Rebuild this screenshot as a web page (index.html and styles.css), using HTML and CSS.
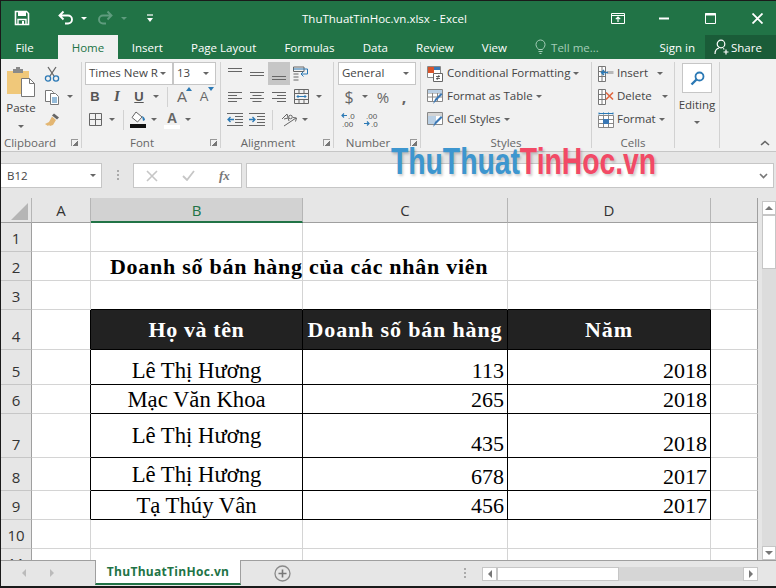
FILE: index.html
```html
<!DOCTYPE html>
<html lang="vi">
<head>
    <meta charset="UTF-8">
    <title>ThuThuatTinHoc.vn.xlsx - Excel</title>
    <link rel="stylesheet" href="styles.css">
</head>
<body>
<div class="window">
    <!-- Title bar -->
    <div class="titlebar">
        <div class="qat">
            <svg class="qat-save" width="16" height="16" viewBox="0 0 16 16"><path d="M1.500 1.500h11l2 2v11h-13z" fill="none" stroke="#fff" stroke-width="1.600"/><path d="M4 1.500h8v4.500H4z" fill="#fff"/><path d="M4 14.500V9.500h8v5" fill="none" stroke="#fff" stroke-width="1.400"/><path d="M8 11h2v3H8z" fill="#fff"/></svg>
            <svg class="qat-undo" width="16" height="16" viewBox="0 0 16 16"><path d="M5.500 1.500 1.500 5.500l4 4M2 5.500h8a4 4 0 0 1 0 8H7" fill="none" stroke="#fff" stroke-width="1.900"/></svg>
            <span class="caret caret-white qat-c1"></span>
            <svg class="qat-redo" width="16" height="16" viewBox="0 0 16 16"><path d="M10.500 1.500l4 4-4 4M14 5.500H6a4 4 0 0 0 0 8h3" fill="none" stroke="#5f9c7e" stroke-width="1.900"/></svg>
            <span class="caret caret-dim qat-c2"></span>
            <svg class="qat-more" width="8" height="9" viewBox="0 0 8 9"><path d="M1 1h6" stroke="#fff" stroke-width="1.200"/><path d="M1 4h6L4 8z" fill="#fff"/></svg>
        </div>
        <div class="title">ThuThuatTinHoc.vn.xlsx - Excel</div>
        <div class="winctl">
            <svg class="win-opt" width="14" height="11" viewBox="0 0 14 11"><path d="M.5.500h13v10H.5z" fill="none" stroke="#fff"/><path d="M.5 2.500h13" stroke="#fff"/><path d="M7 4v5M4.800 6.200 7 4l2.200 2.200" fill="none" stroke="#fff" stroke-width="1.200"/></svg>
            <svg class="win-min" width="10" height="3" viewBox="0 0 10 3"><path d="M0 1.500h10" stroke="#fff" stroke-width="2"/></svg>
            <svg class="win-max" width="11" height="11" viewBox="0 0 11 11"><path d="M.5.500h10v10H.5z" fill="none" stroke="#fff"/><path d="M0 1.500h11" stroke="#fff" stroke-width="2"/></svg>
            <svg class="win-close" width="11" height="11" viewBox="0 0 11 11"><path d="M.5.500l10 10M10.500.500l-10 10" stroke="#fff" stroke-width="1.800"/></svg>
        </div>
    </div>

    <!-- Ribbon tabs -->
    <div class="tabs">
        <span class="tab tab-file">File</span>
        <span class="tab tab-active">Home</span>
        <span class="tab">Insert</span>
        <span class="tab">Page Layout</span>
        <span class="tab">Formulas</span>
        <span class="tab">Data</span>
        <span class="tab">Review</span>
        <span class="tab">View</span>
        <span class="tellme">
            <svg width="11" height="16" viewBox="0 0 11 16"><path d="M3.500 10.500C2.500 8.800 1 8 1 5.500a4.500 4.500 0 0 1 9 0c0 2.500-1.500 3.300-2.500 5z" fill="none" stroke="#a5cdb8"/><path d="M3.500 12.500h4M4.500 14.500h2" stroke="#a5cdb8"/></svg>
            <span>Tell me...</span>
        </span>
        <span class="signin">Sign in</span>
        <span class="share">
            <svg width="16" height="16" viewBox="0 0 16 16"><circle cx="7" cy="5" r="3.800" fill="none" stroke="#fff" stroke-width="1.200"/><path d="M1 15c0-3.500 2-5.500 4-6M9 9.500c.5.200 1 .5 1.300.8" fill="none" stroke="#fff" stroke-width="1.200"/><path d="M12 10.500v5M9.500 13h5" stroke="#fff" stroke-width="1.200"/></svg>
            <span>Share</span>
        </span>
    </div>

    <!-- Ribbon -->
    <div class="ribbon">
        <div class="group g-clipboard">
            <div class="group-body clip-body">
                <div class="paste">
                    <svg width="30" height="32" viewBox="0 0 30 32"><path d="M1 5h22v23H1z" fill="#f0c87a"/><path d="M7 3h10v4H7z" fill="#8a8a8a"/><path d="M10 1h4v3h-4z" fill="#8a8a8a"/><path d="M15.500 12.500h8l5 5v13h-13z" fill="#fff" stroke="#777"/><path d="M23.500 12.500v5h5" fill="none" stroke="#777"/></svg>
                    <span class="paste-label">Paste</span>
                    <span class="caret"></span>
                </div>
                <div class="clip-tools">
                    <div class="rrow"><svg width="16" height="16" viewBox="0 0 16 16"><path d="M4 1l6 9M12 1l-6 9" stroke="#666" stroke-width="1.300"/><circle cx="4" cy="12.500" r="2.600" fill="none" stroke="#2b79b5" stroke-width="1.300"/><circle cx="12" cy="12.500" r="2.600" fill="none" stroke="#2b79b5" stroke-width="1.300"/></svg></div>
                    <div class="rrow"><svg width="16" height="16" viewBox="0 0 16 16"><path d="M1.500 1.500h6l2 2v9h-8z" fill="#fff" stroke="#777"/><path d="M6.500 4.500h5l3 3v8h-8z" fill="#fff" stroke="#777"/><path d="M8 9h5M8 11h5M8 13h5" stroke="#2b79b5"/></svg><span class="caret clip-caret"></span></div>
                    <div class="rrow"><svg width="17" height="16" viewBox="0 0 17 16"><path d="M10 1.500l5 4-2 2-5-4z" fill="#666"/><path d="M8 4.500l4 3.500-3 5-3 1-1-1-1 1-3-2 4-2z" fill="#e3b672"/></svg></div>
                </div>
            </div>
            <div class="group-label label-clip">Clipboard<span class="launcher"></span></div>
        </div>

        <div class="group g-font">
            <div class="rrow">
                <span class="select font-name">Times New R<span class="caret"></span></span>
                <span class="select font-size">13<span class="caret"></span></span>
            </div>
            <div class="rrow">
                <span class="ib"><b class="fmt fmt-b">B</b></span>
                <span class="ib"><i class="fmt fmt-i">I</i></span>
                <span class="ib"><span class="fmt fmt-u">U</span></span>
                <span class="ic"><span class="caret"></span></span>
                <span class="vsep vsep-a"></span>
                <span class="ib grow-a"><span class="big-a">A</span><span class="tri-up"></span></span>
                <span class="ib shrink-a"><span class="small-a">A</span><span class="tri-down"></span></span>
            </div>
            <div class="rrow">
                <span class="ib"><svg width="13" height="13" viewBox="0 0 13 13"><path d="M.5.500h12v12H.5zM6.500.500v12M.5 6.500h12" fill="none" stroke="#666"/></svg></span>
                <span class="ic"><span class="caret"></span></span>
                <span class="vsep vsep-a"></span>
                <span class="ib fill-btn"><svg width="16" height="17" viewBox="0 0 16 17"><path d="M6 1l6 5-4.500 5L2 6.500z" fill="#fff" stroke="#666"/><path d="M12 5c2 1 3 2.500 3 4l-2 1z" fill="#2b79b5"/><path d="M0 13h16v4H0z" fill="#111"/></svg></span>
                <span class="ic ic-narrow"><span class="caret"></span></span>
                <span class="ib color-btn"><span class="color-a">A</span></span>
                <span class="ic ic-narrow"><span class="caret"></span></span>
            </div>
            <div class="group-label label-pad">Font<span class="launcher"></span></div>
        </div>

        <div class="group g-align">
            <div class="rrow">
                <span class="ib"><svg width="14" height="14" viewBox="0 0 14 14"><path d="M0 1.500h14M0 4.500h14" stroke="#666"/></svg></span>
                <span class="ib"><svg width="14" height="14" viewBox="0 0 14 14"><path d="M0 5.500h14M0 8.500h14" stroke="#666"/></svg></span>
                <span class="ib ib-on"><svg width="14" height="14" viewBox="0 0 14 14"><path d="M0 9.500h14M0 12.500h14" stroke="#666"/></svg></span>
                <span class="ib"><svg width="16" height="15" viewBox="0 0 16 15"><path d="M.5 1h10.500v4.500H.5zM.5 8h5M.5 11h5M.5 14h5" fill="none" stroke="#666"/><path d="M.5 3h14v5h-6" fill="none" stroke="#2b79b5"/><path d="M10.500 5.500 8 8l2.500 2.500" fill="none" stroke="#2b79b5"/></svg></span>
            </div>
            <div class="rrow">
                <span class="ib"><svg width="14" height="14" viewBox="0 0 14 14"><path d="M0 2.500h14M0 5.500h9M0 8.500h14M0 11.500h9" stroke="#666"/></svg></span>
                <span class="ib"><svg width="14" height="14" viewBox="0 0 14 14"><path d="M0 2.500h14M2.500 5.500h9M0 8.500h14M2.500 11.500h9" stroke="#666"/></svg></span>
                <span class="ib"><svg width="14" height="14" viewBox="0 0 14 14"><path d="M0 2.500h14M5 5.500h9M0 8.500h14M5 11.500h9" stroke="#666"/></svg></span>
                <span class="ib"><svg width="15" height="15" viewBox="0 0 15 15"><path d="M.5.500h14v14H.5zM.5 4.500h14M.5 10.500h14M5 .5v4M10 .5v4M5 10.500v4M10 10.500v4" fill="none" stroke="#666"/><path d="M3 7.500h9M4.500 6 3 7.500 4.500 9M10.500 6 12 7.500 10.500 9" fill="none" stroke="#2b79b5"/></svg></span>
                <span class="ic merge-c"><span class="caret"></span></span>
            </div>
            <div class="rrow">
                <span class="ib"><svg width="16" height="13" viewBox="0 0 16 13"><path d="M0 .5h16M8 3.500h8M8 6.500h8M8 9.500h8M0 12.500h16" stroke="#666"/><path d="M7 6.500H1M3.500 4 1 6.500 3.500 9" fill="none" stroke="#2b79b5" stroke-width="1.300"/></svg></span>
                <span class="ib"><svg width="16" height="13" viewBox="0 0 16 13"><path d="M0 .5h16M8 3.500h8M8 6.500h8M8 9.500h8M0 12.500h16" stroke="#666"/><path d="M0 6.500h6M3.500 4 6 6.500 3.500 9" fill="none" stroke="#2b79b5" stroke-width="1.300"/></svg></span>
                <span class="vsep vsep-b"></span>
                <span class="ib orient"><svg width="17" height="17" viewBox="0 0 17 17"><path d="M1 8l5-5 2 7M3 8l4-1" fill="none" stroke="#666"/><circle cx="9.500" cy="6" r="1.800" fill="none" stroke="#666"/><path d="M3 15l12-8M12 6.500l3.500.5-1 3.500" fill="none" stroke="#666"/></svg></span>
                <span class="ic ic-narrow"><span class="caret"></span></span>
            </div>
            <div class="group-label label-pad">Alignment<span class="launcher"></span></div>
        </div>

        <div class="group g-number">
            <div class="rrow">
                <span class="select num-format">General<span class="caret"></span></span>
            </div>
            <div class="rrow">
                <span class="ib dollar">$</span>
                <span class="ic ic-narrow"><span class="caret"></span></span>
                <span class="ib percent">%</span>
                <span class="ib comma">,</span>
            </div>
            <div class="rrow">
                <span class="ib ib-20"><svg width="15" height="15" viewBox="0 0 15 15"><path d="M6 3.500H1M3 1.500l-2 2 2 2" fill="none" stroke="#2b79b5" stroke-width="1.200"/><text x="7" y="7" class="dec">.0</text><text x="1" y="14.500" class="dec">.00</text></svg></span>
                <span class="ib ib-20 dec-more"><svg width="15" height="15" viewBox="0 0 15 15"><text x="3" y="7" class="dec">.00</text><path d="M1 11.500h5M4 9.500l2 2-2 2" fill="none" stroke="#2b79b5" stroke-width="1.200"/><text x="8" y="14.500" class="dec">.0</text></svg></span>
            </div>
            <div class="group-label label-pad">Number<span class="launcher"></span></div>
        </div>

        <div class="group g-styles">
            <div class="rrow"><svg class="cmd-icon" width="16" height="16" viewBox="0 0 16 16"><path d="M.5.500h13v11H.5z" fill="#fff" stroke="#888"/><path d="M1 1h6v3H1z" fill="#d9542b"/><path d="M1 4h6v3H1z" fill="#d9542b"/><path d="M7 1h6v3H7z" fill="#3a78b5"/><path d="M6.500 7.500h9v8h-9z" fill="#fff" stroke="#666"/><path d="M9 10.500h4M9 12.500h4M10 14l2-5" stroke="#444" stroke-width=".8"/></svg><span class="cmd">Conditional Formatting</span><span class="caret"></span></div>
            <div class="rrow"><svg class="cmd-icon" width="16" height="16" viewBox="0 0 16 16"><path d="M.5.500h15v12H.5zM.5 4h15M.5 8h15M5.500.5v12M10.500.5v12" fill="#fff" stroke="#888"/><path d="M1 1h14v3H1z" fill="#b9cfe4"/><path d="M6 15l2-5 6-6 1.500 1.500-6 6z" fill="#3a78b5"/></svg><span class="cmd">Format as Table</span><span class="caret"></span></div>
            <div class="rrow"><svg class="cmd-icon" width="16" height="16" viewBox="0 0 16 16"><path d="M.5.500h15v12H.5z" fill="#fff" stroke="#888"/><path d="M1 1h14v3H1z" fill="#d4d4d4"/><path d="M1 4h8v8H1z" fill="#b9cfe4"/><path d="M6 15l2-5 6-6 1.500 1.500-6 6z" fill="#3a78b5"/></svg><span class="cmd">Cell Styles</span><span class="caret"></span></div>
            <div class="group-label">Styles</div>
        </div>

        <div class="group g-cells">
            <div class="rrow"><svg class="cmd-icon" width="16" height="16" viewBox="0 0 16 16"><path d="M.5.500h7v15h-7zM.5 5.500h7M.5 10.500h7M4 .5v15" fill="#fff" stroke="#777"/><path d="M9 5h6.500v3H9z" fill="#b8b8b8"/><path d="M10 6.500H3.500M6 4 3.500 6.500 6 9" fill="none" stroke="#2b79b5" stroke-width="1.500"/></svg><span class="cmd">Insert</span><span class="caret cells-c1"></span></div>
            <div class="rrow"><svg class="cmd-icon" width="16" height="16" viewBox="0 0 16 16"><path d="M.5.500h7v15h-7zM.5 5.500h7M.5 10.500h7M4 .5v15" fill="#fff" stroke="#777"/><path d="M8 3.500l7 7M15 3.500l-7 7" stroke="#e0663f" stroke-width="1.600"/></svg><span class="cmd">Delete</span><span class="caret cells-c2"></span></div>
            <div class="rrow"><svg class="cmd-icon" width="16" height="16" viewBox="0 0 16 16"><path d="M.5 3.500h15v12H.5zM.5 7.500h15M.5 11.500h15M5.500 3.500v12M10.500 3.500v12" fill="#fff" stroke="#888"/><path d="M5 7h6v5H5z" fill="#3a78b5"/><path d="M1 .5v2M5.500.5v2M10.500.5v2M15 .5v2M1 1.500h14" stroke="#2b79b5"/></svg><span class="cmd">Format</span><span class="caret"></span></div>
            <div class="group-label">Cells</div>
        </div>

        <div class="group g-editing">
            <div class="edit-btn"><svg width="15" height="15" viewBox="0 0 15 15"><circle cx="9.500" cy="5.500" r="4" fill="none" stroke="#2b79b5" stroke-width="1.800"/><path d="M6.500 8.500 1.500 13.500" stroke="#2b79b5" stroke-width="2.400"/></svg></div>
            <div class="edit-label">Editing</div>
            <span class="caret"></span>
        </div>
        <svg class="collapse" width="10" height="6" viewBox="0 0 10 6"><path d="M1 5l4-3.500L9 5" fill="none" stroke="#666" stroke-width="1.600"/></svg>
    </div>

    <!-- Formula bar -->
    <div class="formula">
        <div class="namebox">B12<span class="caret"></span></div>
        <div class="fdots"></div>
        <div class="fbtns">
            <svg width="12" height="12" viewBox="0 0 12 12"><path d="M1 1l10 10M11 1 1 11" stroke="#c6c6c6" stroke-width="1.600"/></svg>
            <svg width="13" height="11" viewBox="0 0 13 11"><path d="M1 6l4 4 7-9" fill="none" stroke="#c6c6c6" stroke-width="1.800"/></svg>
            <span class="fx">fx</span>
        </div>
        <div class="finput"><svg width="9" height="6" viewBox="0 0 9 6"><path d="M1 1l3.500 3.500L8 1" fill="none" stroke="#777" stroke-width="1.600"/></svg></div>
    </div>

    <!-- Sheet -->
    <div class="sheet-area">
        <div class="grid">
            <div class="corner"><svg width="17" height="17" viewBox="0 0 17 17"><path d="M17 0v17H0z" fill="#b5b5b5"/></svg></div>
            <div class="colh">A</div><div class="colh colh-on">B</div><div class="colh">C</div><div class="colh">D</div><div class="colh colh-last"></div>

            <div class="rowh">1</div><div class="c"></div><div class="c"></div><div class="c"></div><div class="c"></div><div class="c c-last"></div>
            <div class="rowh">2</div><div class="c"></div><div class="c c-title">Doanh số bán hàng của các nhân viên</div><div class="c c-clear"></div><div class="c"></div><div class="c c-last"></div>
            <div class="rowh">3</div><div class="c"></div><div class="c c-under"></div><div class="c c-under"></div><div class="c c-under"></div><div class="c c-last"></div>
            <div class="rowh">4</div><div class="c c-left"></div><div class="c c-head c-head-short">Họ và tên</div><div class="c c-head">Doanh số bán hàng</div><div class="c c-head">Năm</div><div class="c c-last"></div>
            <div class="rowh">5</div><div class="c c-left"></div><div class="c c-t c-name">Lê Thị Hương</div><div class="c c-t c-num">113</div><div class="c c-t c-num">2018</div><div class="c c-last"></div>
            <div class="rowh">6</div><div class="c c-left"></div><div class="c c-t c-name">Mạc Văn Khoa</div><div class="c c-t c-num">265</div><div class="c c-t c-num">2018</div><div class="c c-last"></div>
            <div class="rowh">7</div><div class="c c-left"></div><div class="c c-t c-name c-mid">Lê Thị Hương</div><div class="c c-t c-num">435</div><div class="c c-t c-num">2018</div><div class="c c-last"></div>
            <div class="rowh">8</div><div class="c c-left"></div><div class="c c-t c-name c-raised">Lê Thị Hương</div><div class="c c-t c-num">678</div><div class="c c-t c-num">2017</div><div class="c c-last"></div>
            <div class="rowh">9</div><div class="c c-left"></div><div class="c c-t c-name">Tạ Thúy Vân</div><div class="c c-t c-num">456</div><div class="c c-t c-num">2017</div><div class="c c-last"></div>
            <div class="rowh">10</div><div class="c"></div><div class="c"></div><div class="c"></div><div class="c"></div><div class="c c-last"></div>
            <div class="rowh rowh-cut">11</div><div class="c"></div><div class="c"></div><div class="c"></div><div class="c"></div><div class="c c-last"></div>
        </div>
        <div class="vscroll">
            <div class="sb-btn"><span class="tri tri-n"></span></div>
            <div class="sb-thumb"></div>
            <div class="sb-track"></div>
            <div class="sb-btn"><span class="tri tri-s"></span></div>
        </div>
    </div>

    <!-- Sheet tabs and horizontal scrollbar -->
    <div class="sheetbar">
        <span class="nav"><span class="tri tri-w tri-pale"></span></span>
        <span class="nav"><span class="tri tri-e tri-pale"></span></span>
        <div class="sheet-tab">ThuThuatTinHoc.vn</div>
        <svg class="add-sheet" width="17" height="17" viewBox="0 0 17 17"><circle cx="8.500" cy="8.500" r="7.500" fill="none" stroke="#8a8a8a" stroke-width="1.300"/><path d="M8.500 4.500v8M4.500 8.500h8" stroke="#777" stroke-width="1.600"/></svg>
        <div class="hdots"></div>
        <div class="hscroll">
            <div class="sb-btn sb-btn-h"><span class="tri tri-w"></span></div>
            <div class="sb-thumb-h"></div>
            <div class="sb-track-h"></div>
            <div class="sb-btn sb-btn-h"><span class="tri tri-e"></span></div>
        </div>
    </div>

    <!-- Site watermark laid over the ribbon and formula bar -->
    <div class="watermark"><span class="wm-blue">ThuThuat</span><span class="wm-red">TinHoc.vn</span></div>
</div>
</body>
</html>
```

FILE: styles.css
```css
* {
    box-sizing: border-box;
}

html, body {
    margin: 0;
    padding: 0;
}

body {
    font-family: "Open Sans", "Noto Sans", sans-serif;
    font-size: 11.5px;
    color: #444;
}

.window {
    position: relative;
    width: 776px;
    height: 588px;
    overflow: hidden;
    border-top: 1px solid #1a1a1a;
    border-left: 1px solid #1a1a1a;
    border-bottom: 2px solid #1a1a1a;
    background: #e6e6e6;
}

.caret {
    display: inline-block;
    width: 0;
    height: 0;
    border-left: 3px solid transparent;
    border-right: 3px solid transparent;
    border-top: 3px solid #666;
}

/* Title bar */
.titlebar {
    display: flex;
    align-items: center;
    height: 34px;
    background: #217346;
    color: #fff;
}

.qat {
    display: flex;
    align-items: center;
    width: 301px;
    padding-left: 13px;
}

.caret-white { border-top-color: #fff; }
.caret-dim { border-top-color: #5f9c7e; }
.qat-undo { margin-left: 28px; }
.qat-c1 { margin-left: 7px; }
.qat-redo { margin-left: 10px; }
.qat-c2 { margin-left: 8px; }
.qat-more { margin-left: 19px; }

.title {
    width: 170px;
    white-space: nowrap;
}

.winctl {
    display: flex;
    align-items: center;
    padding-left: 139px;
}

.win-min { margin-left: 34px; }
.win-max { margin-left: 36px; }
.win-close { margin-left: 36px; }

/* Tabs */
.tabs {
    display: flex;
    height: 24px;
    background: #217346;
    color: #fff;
    white-space: nowrap;
}

.tab {
    display: flex;
    align-items: center;
    padding: 0 14.1px;
}

.tab-file { margin-right: 10px; padding: 0 14.5px; }

.tab-active {
    padding: 0 13.5px;
    background: #f1f1f1;
    color: #217346;
}

.tellme {
    display: flex;
    align-items: center;
    gap: 5px;
    margin-left: 14px;
    color: #a5cdb8;
}

.signin {
    display: flex;
    align-items: center;
    margin-left: auto;
}

.share {
    display: flex;
    align-items: center;
    gap: 1px;
    width: 71px;
    margin-left: 10px;
    padding-left: 9px;
    background: #1a5c38;
}

/* Ribbon */
.ribbon {
    position: relative;
    display: flex;
    height: 93px;
    padding-top: 3px;
    background: #f1f1f1;
    border-bottom: 1px solid #c6c6c6;
}

.group {
    position: relative;
    height: 86px;
    border-right: 1px solid #d2d2d2;
}

.group-label {
    position: absolute;
    left: 0;
    right: 0;
    bottom: -3px;
    height: 16px;
    line-height: 16px;
    text-align: center;
    color: #666;
}

.label-pad { padding-right: 18px; }
.label-clip { padding-right: 22px; }

.launcher {
    position: absolute;
    right: 3px;
    top: 4px;
    width: 7px;
    height: 7px;
    border-left: 1px solid #999;
    border-top: 1px solid #999;
    background: linear-gradient(135deg, transparent 55%, #777 55%);
}

.rrow {
    display: flex;
    align-items: center;
    height: 23px;
    white-space: nowrap;
}

.ib {
    position: relative;
    display: flex;
    align-items: center;
    justify-content: center;
    width: 22px;
    height: 23px;
    flex: none;
}

.ib-on { background: #c6c6c6; }
.ib-20 { width: 20px; }

.ic {
    display: flex;
    align-items: center;
    justify-content: center;
    width: 12px;
    flex: none;
}

.ic-narrow { width: 10px; }

.vsep {
    width: 1px;
    height: 20px;
    background: #d2d2d2;
    flex: none;
}

.select {
    display: flex;
    align-items: center;
    justify-content: space-between;
    height: 23px;
    padding: 0 6px 2px 3px;
    background: #fff;
    border: 1px solid #c6c6c6;
}

.select .caret { margin-top: 2px; }

/* Clipboard */
.g-clipboard { width: 81px; }

.clip-body {
    display: flex;
}

.paste {
    display: flex;
    flex-direction: column;
    align-items: center;
    width: 43px;
    padding: 4px 3px 0 0;
}

.paste-label {
    margin-top: 2px;
    line-height: 16px;
    color: #444;
}

.paste .caret { margin-top: 9px; }

.clip-caret { margin-left: 7px; }

/* Font */
.g-font {
    width: 139px;
    padding-left: 2px;
}

.font-name {
    width: 88px;
    margin-left: 1px;
}

.font-size {
    width: 43px;
}

.fmt {
    font-size: 13px;
    color: #555;
    font-family: "Liberation Sans", sans-serif;
}

.fmt-i { font-family: "Liberation Serif", serif; font-size: 15px; font-weight: bold; }
.fmt-u { text-decoration: underline; font-weight: bold; }

.vsep-a { margin-left: 5px; margin-right: 3px; }

.big-a, .small-a, .color-a {
    font-family: "Liberation Sans", sans-serif;
    color: #666;
}

.big-a { font-size: 15px; }
.small-a { font-size: 13px; }

.tri-up, .tri-down {
    position: absolute;
    right: 1px;
    top: 2px;
    width: 0;
    height: 0;
    border-left: 3px solid transparent;
    border-right: 3px solid transparent;
}

.tri-up { border-bottom: 4px solid #2b79b5; }
.tri-down { border-top: 4px solid #2b79b5; }

.color-btn { margin-left: 2px; }

.color-a {
    font-size: 14px;
    font-weight: bold;
    line-height: 14px;
    padding: 0 3px;
    border-bottom: 4px solid #fff;
}

/* Alignment */
.g-align {
    width: 113px;
    padding-left: 3px;
}

.merge-c { margin-left: 1px; }
.vsep-b { margin-left: 4px; margin-right: 5px; }

/* Number */
.g-number {
    width: 87px;
    padding-left: 4px;
}

.num-format { width: 78px; }

.dollar {
    font-size: 16px;
    color: #666;
}

.percent {
    margin-left: 2px;
    font-size: 15px;
    color: #666;
}

.comma {
    width: 20px;
    font-size: 16px;
    font-weight: bold;
    color: #666;
}

.dec {
    font-family: "Liberation Sans", sans-serif;
    font-size: 8px;
    fill: #555;
}

.dec-more { margin-left: 2px; }

/* Styles and cells */
.g-styles {
    width: 171px;
    padding-left: 6px;
}

.cmd-icon { flex: none; }

.cmd {
    margin: 0 3px 2px 4px;
}

.g-cells {
    width: 83px;
    padding-left: 6px;
}

.g-cells .cmd { margin-left: 3px; }

.cells-c1 { margin-left: 6px; }
.cells-c2 { margin-left: 7px; }

/* Editing */
.g-editing {
    display: flex;
    flex-direction: column;
    align-items: center;
    width: 45px;
    padding-top: 1px;
}

.edit-btn {
    display: flex;
    align-items: center;
    justify-content: center;
    width: 30px;
    height: 30px;
    background: #fff;
    border: 1px solid #c6c6c6;
}

.edit-label {
    margin-top: 4px;
    line-height: 16px;
}

.g-editing .caret { margin-top: 8px; }

.collapse {
    position: absolute;
    right: 6px;
    bottom: 5px;
}

/* Formula bar */
.formula {
    display: flex;
    height: 46px;
    padding-top: 11px;
    background: #e6e6e6;
}

.namebox {
    display: flex;
    align-items: center;
    justify-content: space-between;
    width: 101px;
    height: 25px;
    padding: 0 5px 0 6px;
    color: #444;
    background: #fff;
    border: 1px solid #c6c6c6;
    border-left: 0;
}

.fdots {
    width: 2px;
    height: 11px;
    margin: 7px 14px 0 15px;
    background: repeating-linear-gradient(#aaa 0 2px, transparent 2px 4px);
}

.fbtns {
    display: flex;
    align-items: center;
    width: 109px;
    height: 25px;
    padding-left: 12px;
    background: #fff;
    border: 1px solid #c6c6c6;
}

.fbtns svg + svg { margin-left: 24px; }

.fx {
    margin-left: 24px;
    font-family: "Liberation Serif", serif;
    font-style: italic;
    font-weight: bold;
    font-size: 13px;
    color: #777;
}

.finput {
    display: flex;
    align-items: center;
    justify-content: flex-end;
    width: 528px;
    height: 25px;
    margin-left: 4px;
    padding-right: 5px;
    background: #fff;
    border: 1px solid #c6c6c6;
}

/* Sheet */
.sheet-area {
    display: flex;
    height: 362px;
    overflow: hidden;
}

.grid {
    display: grid;
    grid-template-columns: 31px 59px 212px 205px 203px 47px;
    grid-template-rows: 25px 29px 29px 29px 40px 35px 29px 44px 33px 29px 29px 29px;
    width: 757px;
    background: #fff;
}

.corner {
    display: flex;
    align-items: flex-end;
    justify-content: flex-end;
    padding: 0 3px 2px 0;
    background: #e6e6e6;
    border-right: 1px solid #b5b5b5;
    border-bottom: 1px solid #9f9f9f;
}

.colh {
    display: flex;
    align-items: center;
    justify-content: center;
    font-size: 15px;
    color: #333;
    background: #e6e6e6;
    border-right: 1px solid #b5b5b5;
    border-bottom: 1px solid #9f9f9f;
}

.colh-on {
    background: #d2d2d2;
    color: #217346;
    border-bottom: 2px solid #217346;
}

.colh-last {
    border-right: 1px solid #9f9f9f;
    border-bottom: 1px solid #9f9f9f;
}

.rowh {
    display: flex;
    align-items: flex-end;
    justify-content: center;
    padding-bottom: 3px;
    font-size: 15px;
    line-height: 20px;
    color: #333;
    background: #e6e6e6;
    border-right: 1px solid #9f9f9f;
    border-bottom: 1px solid #c6c6c6;
}

.rowh-cut { padding-bottom: 4px; }

.c {
    display: flex;
    align-items: flex-end;
    min-width: 0;
    white-space: nowrap;
    font-family: "Liberation Serif", serif;
    color: #000;
    border-right: 1px solid #d4d4d4;
    border-bottom: 1px solid #d4d4d4;
}

.c-last { border-right-color: #9f9f9f; }

.c-clear { border-right-color: #d4d4d4; }

.c-title {
    padding: 0 0 0 19px;
    overflow: visible;
    font-size: 22px;
    font-weight: bold;
    letter-spacing: .73px;
    line-height: 26px;
}

.c-under { border-bottom-color: #000; }
.c-left { border-right-color: #000; }

.c-head {
    align-items: center;
    justify-content: center;
    font-size: 22px;
    font-weight: bold;
    letter-spacing: .85px;
    color: #fff;
    background: #222;
    border-color: #000;
}

.c-head-short { letter-spacing: .6px; }

.c-t {
    font-size: 23px;
    line-height: 27px;
    border-right-color: #000;
    border-bottom-color: #000;
}

.c-name {
    justify-content: center;
    font-size: 22.7px;
}

.c-mid { align-items: center; }
.c-raised { padding-bottom: 2px; }

.c-num {
    justify-content: flex-end;
    padding-right: 3px;
    font-size: 22px;
}

/* Scrollbars */
.vscroll {
    display: flex;
    flex-direction: column;
    width: 18px;
    padding: 3px 0 0 4px;
    background: #e6e6e6;
}

.sb-btn {
    display: flex;
    align-items: center;
    justify-content: center;
    width: 14px;
    height: 14px;
    background: #fff;
    border: 1px solid #c6c6c6;
    flex: none;
}

.sb-thumb {
    width: 14px;
    height: 54px;
    background: #fff;
    border: 1px solid #c6c6c6;
}

.sb-track {
    flex: 1;
    width: 14px;
    background: #dcdcdc;
}

.tri {
    display: block;
    width: 0;
    height: 0;
    border: 4px solid transparent;
}

.tri-n { border-bottom-color: #777; border-top-width: 0; }
.tri-s { border-top-color: #777; border-bottom-width: 0; }
.tri-w { border-right-color: #777; border-left-width: 0; }
.tri-e { border-left-color: #777; border-right-width: 0; }
.tri-pale.tri-w { border-right-color: #bbb; }
.tri-pale.tri-e { border-left-color: #bbb; }

.sheetbar {
    display: flex;
    align-items: flex-start;
    height: 25px;
    background: #e6e6e6;
    border-top: 1px solid #9f9f9f;
}

.nav {
    display: flex;
    align-items: center;
    justify-content: center;
    width: 28px;
    height: 24px;
}

.nav:first-child { margin-left: 9px; }

.sheet-tab {
    width: 146px;
    height: 25px;
    margin-top: -1px;
    margin-left: 29px;
    line-height: 24px;
    text-align: center;
    font-size: 12px;
    font-weight: bold;
    letter-spacing: .3px;
    color: #217346;
    background: #fff;
    border-left: 1px solid #9f9f9f;
    border-right: 1px solid #9f9f9f;
    border-bottom: 2px solid #217346;
}

.add-sheet {
    margin: 4px 0 0 33px;
}

.hdots {
    width: 2px;
    height: 11px;
    margin: 7px 0 0 173px;
    background: repeating-linear-gradient(#aaa 0 2px, transparent 2px 4px);
}

.hscroll {
    display: flex;
    margin: 6px 0 0 16px;
}

.sb-btn-h { width: 15px; }

.sb-thumb-h {
    width: 122px;
    height: 14px;
    background: #fff;
    border: 1px solid #c6c6c6;
}

.sb-track-h {
    width: 124px;
    height: 14px;
    background: #d6d6d6;
}

/* Watermark */
.watermark {
    position: absolute;
    left: 390px;
    top: 138px;
    font-family: "Liberation Sans", sans-serif;
    font-size: 36px;
    font-weight: bold;
    line-height: 46px;
    white-space: nowrap;
    transform: scaleX(.786);
    transform-origin: left top;
    text-shadow: 2px 2px 3px rgba(0, 0, 0, .2);
}

.wm-blue { color: #3d96cf; }
.wm-red { color: #f24a66; }
```
